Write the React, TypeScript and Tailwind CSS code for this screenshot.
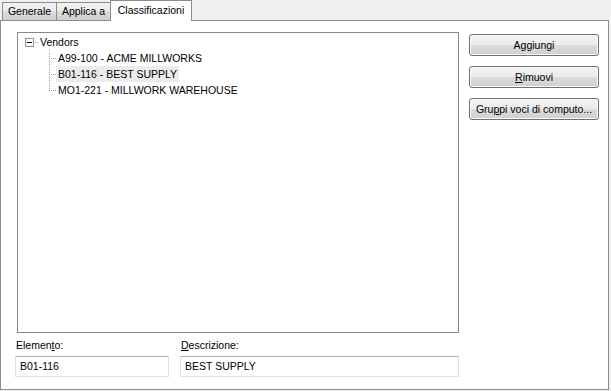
import React from "react";

function hDots(x1: number, x2: number, y: number, k: string) {
  const r: React.ReactElement[] = [];
  for (let x = x1; x <= x2; x += 2) r.push(<rect key={`${k}h${x}`} x={x} y={y} width={1} height={1} />);
  return r;
}
function vDots(x: number, y1: number, y2: number, k: string) {
  const r: React.ReactElement[] = [];
  for (let y = y1; y <= y2; y += 2) r.push(<rect key={`${k}v${y}`} x={x} y={y} width={1} height={1} />);
  return r;
}

function Tab({ children, selected, className }: { children: React.ReactNode; selected?: boolean; className?: string }) {
  if (selected) {
    return (
      <div className={`h-[21px] border-l border-t border-r border-[#898c95] bg-white flex items-start justify-center pt-[3px] ${className ?? ""}`}>
        {children}
      </div>
    );
  }
  return (
    <div
      className={`h-[18px] mb-px border-l border-t border-r border-[#898c95] flex items-center justify-center bg-[linear-gradient(to_bottom,#f2f2f2_0%,#ebebeb_50%,#dddddd_50%,#cfcfcf_100%)] ${className ?? ""}`}
    >
      {children}
    </div>
  );
}

function Button({ children }: { children: React.ReactNode }) {
  return (
    <div className="h-[22px] w-[130px] rounded-[3px] border border-[#707070] bg-[linear-gradient(to_bottom,#f2f2f2_0%,#ebebeb_50%,#dddddd_50%,#cfcfcf_100%)] shadow-[inset_0_0_0_1px_#fcfcfc] flex items-center justify-center text-black whitespace-nowrap">
      {children}
    </div>
  );
}

const children = ["A99-100 - ACME MILLWORKS", "B01-116 - BEST SUPPLY", "MO1-221 - MILLWORK WAREHOUSE"];

export default function App() {
  return (
    <div className="w-[611px] h-[391px] bg-[#f0f0f0] text-black text-[10.5px] leading-[13px] font-['Liberation_Sans',Arial,sans-serif] overflow-hidden">
      <div className="relative z-10 flex items-end h-[21px] pl-[2px]">
        <Tab className="w-[55px]">Generale</Tab>
        <Tab className="w-[55px] -ml-px">Applica a</Tab>
        <Tab selected className="w-[82px] -ml-px">Classificazioni</Tab>
      </div>
      <div className="-mt-px w-[609px] h-[370px] border border-[#898c95] bg-white pl-[14px] pt-[11px] flex flex-col">
        <div className="flex">
          <div className="ml-[2px] w-[442px] h-[301px] border border-[#828790] bg-white pt-px">
            <div className="flex items-center h-[16px]">
              <svg width="20" height="16" className="shrink-0">
                <rect x="7.5" y="4.5" width="8" height="8" fill="#fff" stroke="#919191" />
                <rect x="9" y="8" width="5" height="1" fill="#000" />
                <g fill="#a0a0a0">{hDots(17, 19, 8, "p")}</g>
              </svg>
              <span className="px-[2px] h-[16px] flex items-center">Vendors</span>
            </div>
            {children.map((c, i) => {
              const last = i === children.length - 1;
              return (
                <div key={c} className="flex items-center h-[16px]">
                  <svg width="38" height="16" className="shrink-0">
                    <g fill="#a0a0a0">
                      {vDots(31, 0, last ? 8 : 15, `c${i}`)}
                      {hDots(33, 37, 8, `c${i}`)}
                    </g>
                  </svg>
                  <span className={`px-[2px] h-[16px] flex items-center ${i === 1 ? "bg-[#ececec]" : ""}`}>{c}</span>
                </div>
              );
            })}
          </div>
          <div className="ml-[10px] mt-[2px] flex flex-col gap-[10px]">
            <Button>
              <span>
                A<span className="underline underline-offset-1">g</span>giungi
              </span>
            </Button>
            <Button>
              <span>
                <span className="underline underline-offset-1">R</span>imuovi
              </span>
            </Button>
            <Button>
              <span>
                Gru<span className="underline underline-offset-1">p</span>pi voci di computo...
              </span>
            </Button>
          </div>
        </div>
        <div className="flex gap-[11px] mt-[6px]">
          <div className="w-[154px] flex flex-col">
            <div className="pl-px h-[13px]">
              Elemen<span className="underline underline-offset-1">t</span>o:
            </div>
            <div className="mt-[4px] h-[21px] border border-[#dbdfe6] border-t-[#abadb3] bg-white flex items-center pl-[4px]">B01-116</div>
          </div>
          <div className="w-[279px] flex flex-col">
            <div className="pl-px h-[13px]">
              <span className="underline underline-offset-1">D</span>escrizione:
            </div>
            <div className="mt-[4px] h-[21px] border border-[#dbdfe6] border-t-[#abadb3] bg-white flex items-center pl-[4px]">BEST SUPPLY</div>
          </div>
        </div>
      </div>
    </div>
  );
}
